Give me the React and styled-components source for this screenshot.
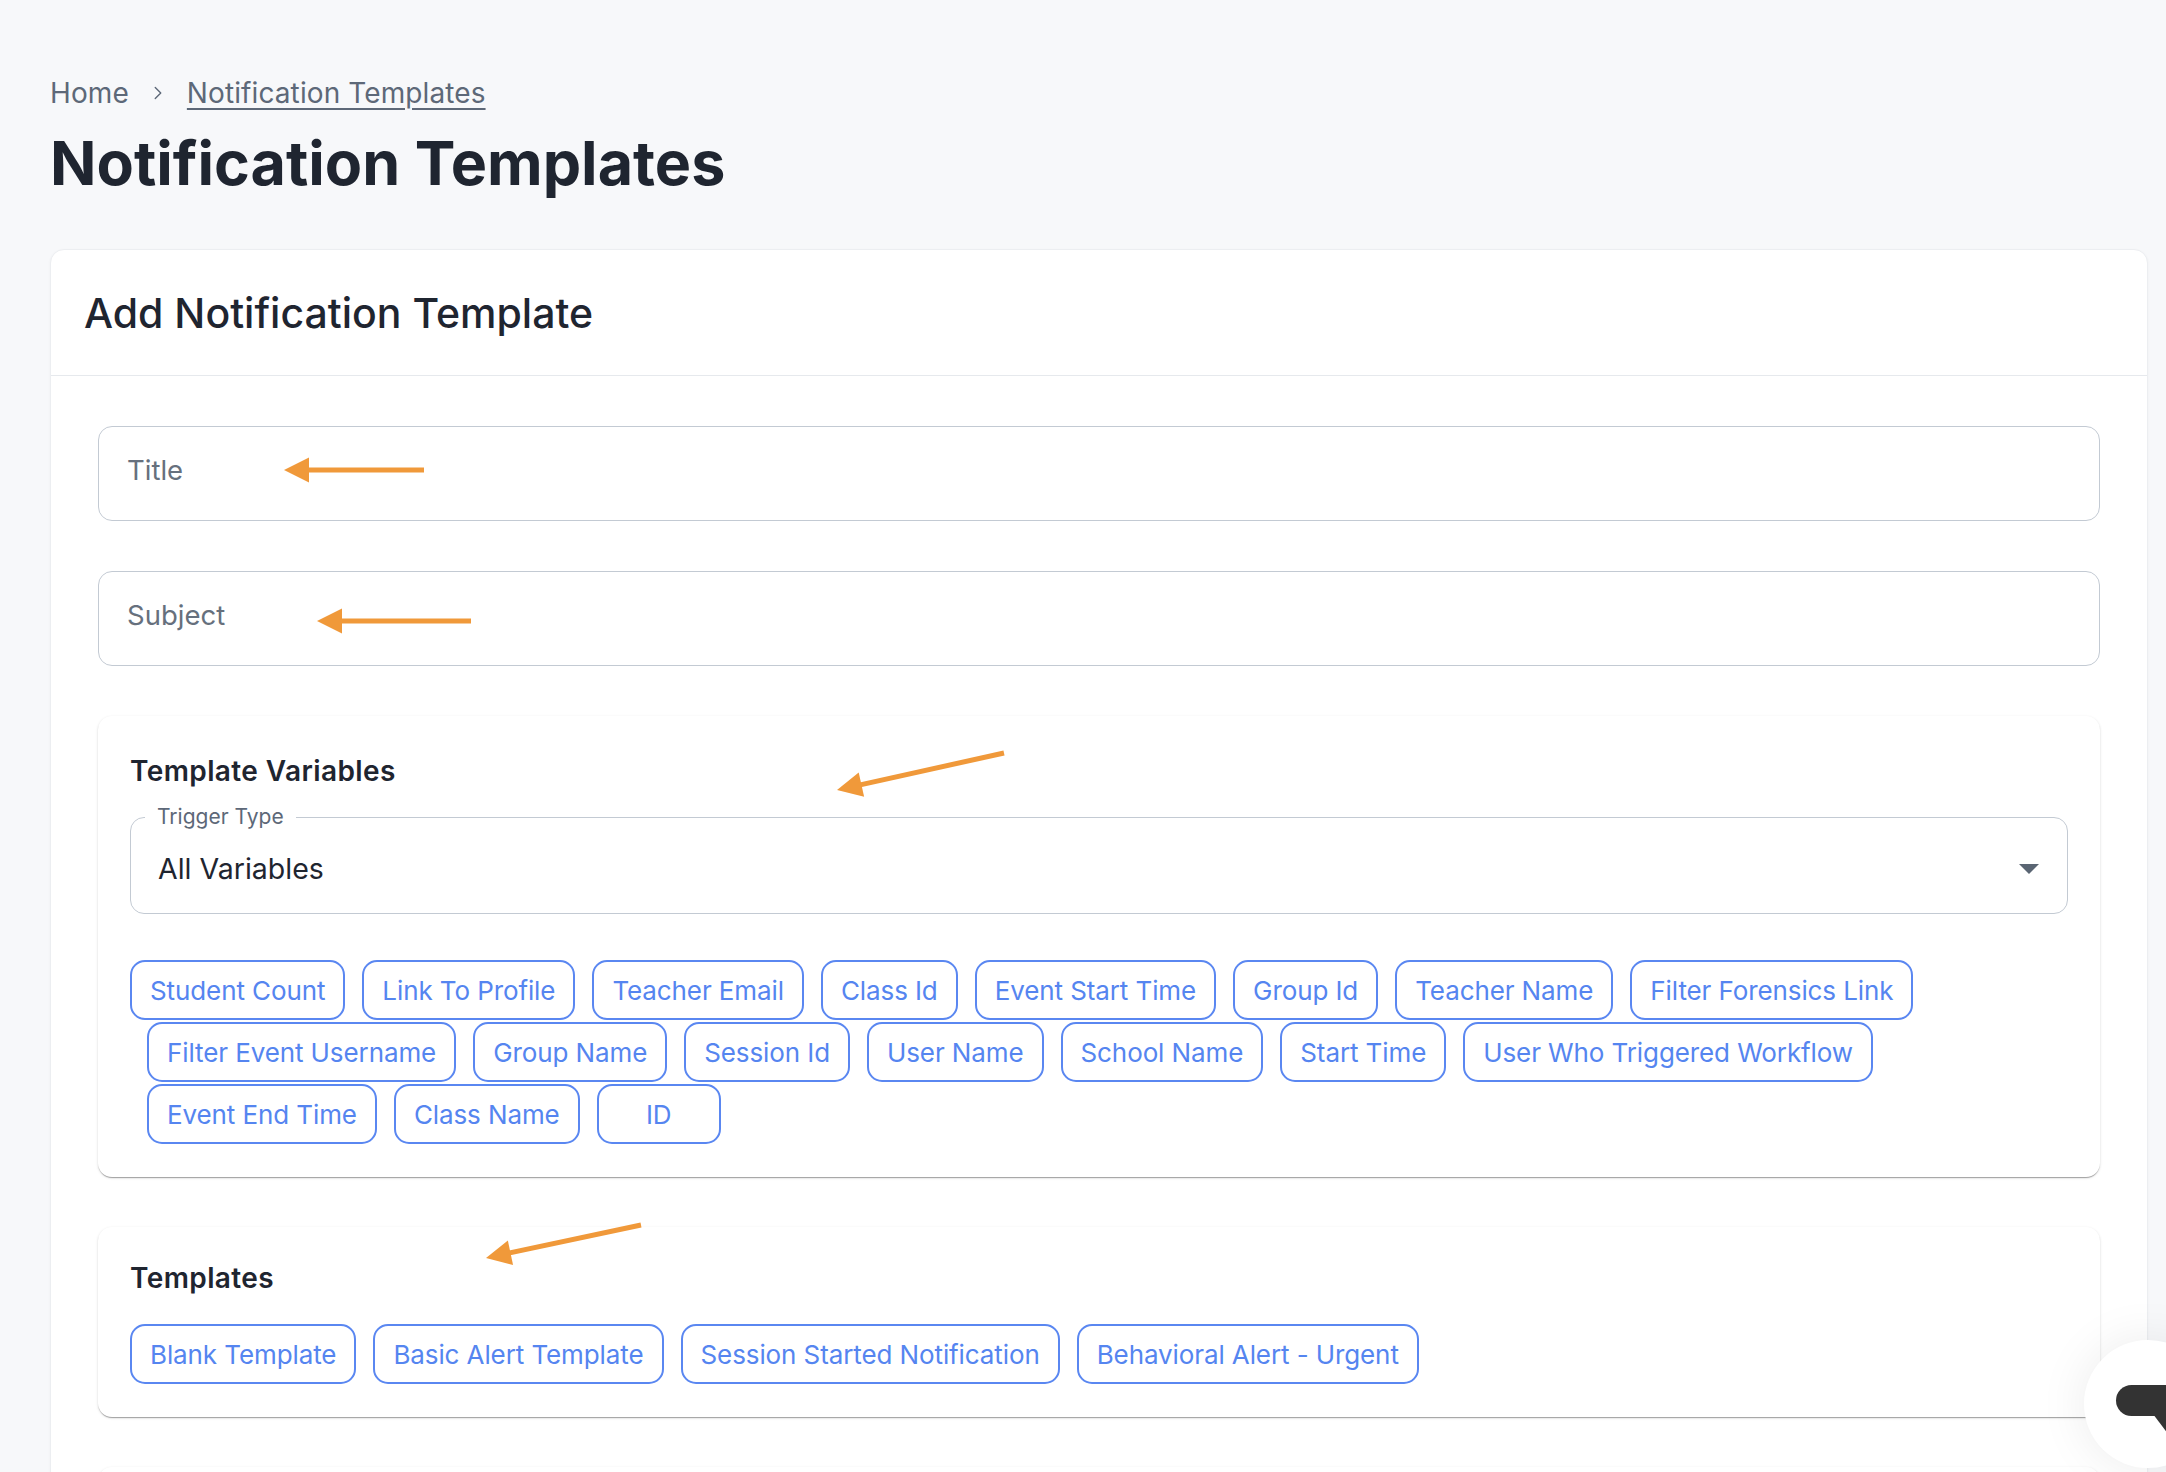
import React from "react";
import styled, { createGlobalStyle } from "styled-components";
import { ChevronRight } from "lucide-react";

const VARIABLES = [
  "Student Count",
  "Link To Profile",
  "Teacher Email",
  "Class Id",
  "Event Start Time",
  "Group Id",
  "Teacher Name",
  "Filter Forensics Link",
  "Filter Event Username",
  "Group Name",
  "Session Id",
  "User Name",
  "School Name",
  "Start Time",
  "User Who Triggered Workflow",
  "Event End Time",
  "Class Name",
  "ID"
];

const TEMPLATES = [
  "Blank Template",
  "Basic Alert Template",
  "Session Started Notification",
  "Behavioral Alert - Urgent"
];

// annotation arrows drawn on top of the screenshot: [tail, tip]
const ARROWS = [
  [[424, 470], [284, 470]],
  [[471, 621], [317, 621]],
  [[1004, 753], [837, 790]],
  [[641, 1225], [486, 1258]]
];

const arrowHead = ([tx, ty], [px, py]) => {
  const dx = tx - px;
  const dy = ty - py;
  const len = Math.hypot(dx, dy);
  const ux = dx / len;
  const uy = dy / len;
  const bx = px + ux * 25;
  const by = py + uy * 25;
  const hw = 12.5;
  return {
    points: `${px},${py} ${bx - uy * hw},${by + ux * hw} ${bx + uy * hw},${by - ux * hw}`,
    base: [px + ux * 18, py + uy * 18]
  };
};

const App = () => (
  <Page>
    <GlobalStyle />
    <Breadcrumb>
      <span>Home</span>
      <ChevronRight size={22} strokeWidth={1.5} />
      <CrumbLink href="#">Notification Templates</CrumbLink>
    </Breadcrumb>
    <PageTitle>Notification Templates</PageTitle>

    <Card>
      <CardHeader>Add Notification Template</CardHeader>
      <CardBody>
        <TextInput placeholder="Title" />
        <TextInput placeholder="Subject" />

        <Section $top={37}>
          <SectionTitle $space={16}>Template Variables</SectionTitle>
          <SelectBox>
            <SelectLabel>Trigger Type</SelectLabel>
            <SelectValue>
              <span>All Variables</span>
              <svg width="48" height="48" viewBox="0 0 24 24">
                <path d="M7 10l5 5 5-5z" fill="#5a6573" />
              </svg>
            </SelectValue>
          </SelectBox>
          <ChipList $top={46}>
            {VARIABLES.map(v => (
              <Chip key={v}>{v}</Chip>
            ))}
          </ChipList>
        </Section>

        <Section $top={33}>
          <SectionTitle $space={28}>Templates</SectionTitle>
          <ChipList>
            {TEMPLATES.map(t => (
              <Chip key={t}>{t}</Chip>
            ))}
          </ChipList>
        </Section>

        <Section $top={33} $tall />
      </CardBody>
    </Card>

    <Annotations width="2166" height="1472" viewBox="0 0 2166 1472">
      {ARROWS.map(([tail, tip], i) => {
        const head = arrowHead(tail, tip);
        return (
          <g key={i} fill="#f0993a" stroke="#f0993a">
            <line
              x1={tail[0]}
              y1={tail[1]}
              x2={head.base[0]}
              y2={head.base[1]}
              strokeWidth="5"
            />
            <polygon points={head.points} stroke="none" />
          </g>
        );
      })}
    </Annotations>

    <ChatBubble>
      <svg width="128" height="128" viewBox="0 0 128 128">
        <rect x="32" y="45" width="90" height="31" rx="15.5" fill="#333" />
        <polygon points="69,74 84,74 84,94" fill="#333" />
      </svg>
    </ChatBubble>
  </Page>
);

const GlobalStyle = createGlobalStyle`
  html, body {
    margin: 0;
    padding: 0;
    background: #f7f8fa;
    overflow: hidden;
  }
  body {
    font-family: Inter, "Noto Sans", sans-serif;
  }
  * {
    box-sizing: border-box;
  }
`;

const Page = styled.div`
  position: relative;
  width: 2166px;
  height: 1472px;
  overflow: hidden;
  padding: 75px 18px 0 50px;
  background: #f7f8fa;
`;

const Breadcrumb = styled.nav`
  display: flex;
  align-items: center;
  gap: 18px;
  font-size: 28px;
  letter-spacing: 0.1px;
  line-height: 36px;
  color: #5d6878;
`;

const CrumbLink = styled.a`
  color: #5d6878;
  text-decoration: underline;
  text-underline-offset: 5px;
  text-decoration-thickness: 2px;
`;

const PageTitle = styled.h1`
  margin: 16px 0 50px;
  font-size: 61px;
  line-height: 72px;
  font-weight: 700;
  color: #1f2530;
`;

const Card = styled.div`
  background: #fff;
  border: 1px solid #eceef1;
  border-radius: 14px;
  box-shadow: 0 1px 3px rgba(0, 0, 0, 0.04);
`;

const CardHeader = styled.div`
  display: flex;
  align-items: center;
  height: 126px;
  padding: 0 33px;
  border-bottom: 1.5px solid #e6e9ed;
  font-size: 41px;
  font-weight: 500;
  color: #1f2530;
`;

const CardBody = styled.div`
  display: flex;
  flex-direction: column;
  gap: 50px;
  padding: 50px 47px;
`;

const TextInput = styled.input`
  height: 95px;
  width: 100%;
  padding: 0 28px 8px;
  border: 1.5px solid #c3cad3;
  border-radius: 14px;
  font-family: inherit;
  font-size: 27.5px;
  color: #1f2530;
  background: #fff;
  outline: none;

  &::placeholder {
    color: #66707d;
  }
`;

const Section = styled.section`
  background: #fff;
  border-radius: 14px;
  padding: ${props => props.$top}px 32px 33px;
  min-height: ${props => (props.$tall ? "240px" : "0")};
  box-shadow: 0 2px 1px -1px rgba(0, 0, 0, 0.2), 0 1px 1px 0 rgba(0, 0, 0, 0.14),
    0 1px 3px 0 rgba(0, 0, 0, 0.12);
`;

const SectionTitle = styled.h3`
  margin: 0 0 ${props => props.$space}px;
  font-size: 28px;
  letter-spacing: 0.4px;
  line-height: 36px;
  font-weight: 600;
  color: #1f2530;
`;

const SelectBox = styled.fieldset`
  margin: 0;
  min-width: 0;
  padding: 0 14px 6px 14px;
  border: 1.5px solid #c3cad3;
  border-radius: 14px;
`;

const SelectLabel = styled.legend`
  padding: 0 12px;
  font-size: 21px;
  line-height: 24px;
  color: #5d6878;
`;

const SelectValue = styled.div`
  display: flex;
  align-items: center;
  justify-content: space-between;
  height: 78px;
  padding-left: 13px;
  font-size: 28.5px;
  color: #1f2530;
`;

const ChipList = styled.div`
  display: flex;
  flex-wrap: wrap;
  row-gap: 2px;
  margin-top: ${props => props.$top || 0}px;
`;

const Chip = styled.button`
  height: 60px;
  min-width: 124px;
  padding: 0 18px;
  border: 2px solid #5a87f1;
  border-radius: 15px;
  background: #fff;
  font-family: inherit;
  font-size: 26px;
  letter-spacing: -0.1px;
  color: #5585f0;
  cursor: pointer;

  & + & {
    margin-left: 17px;
  }
`;

const Annotations = styled.svg`
  position: absolute;
  top: 0;
  left: 0;
  pointer-events: none;
`;

const ChatBubble = styled.div`
  position: absolute;
  left: 2084px;
  top: 1340px;
  width: 128px;
  height: 128px;
  border-radius: 50%;
  background: #fff;
  box-shadow: 0 0 50px rgba(0, 0, 0, 0.08);
`;

export default App;
